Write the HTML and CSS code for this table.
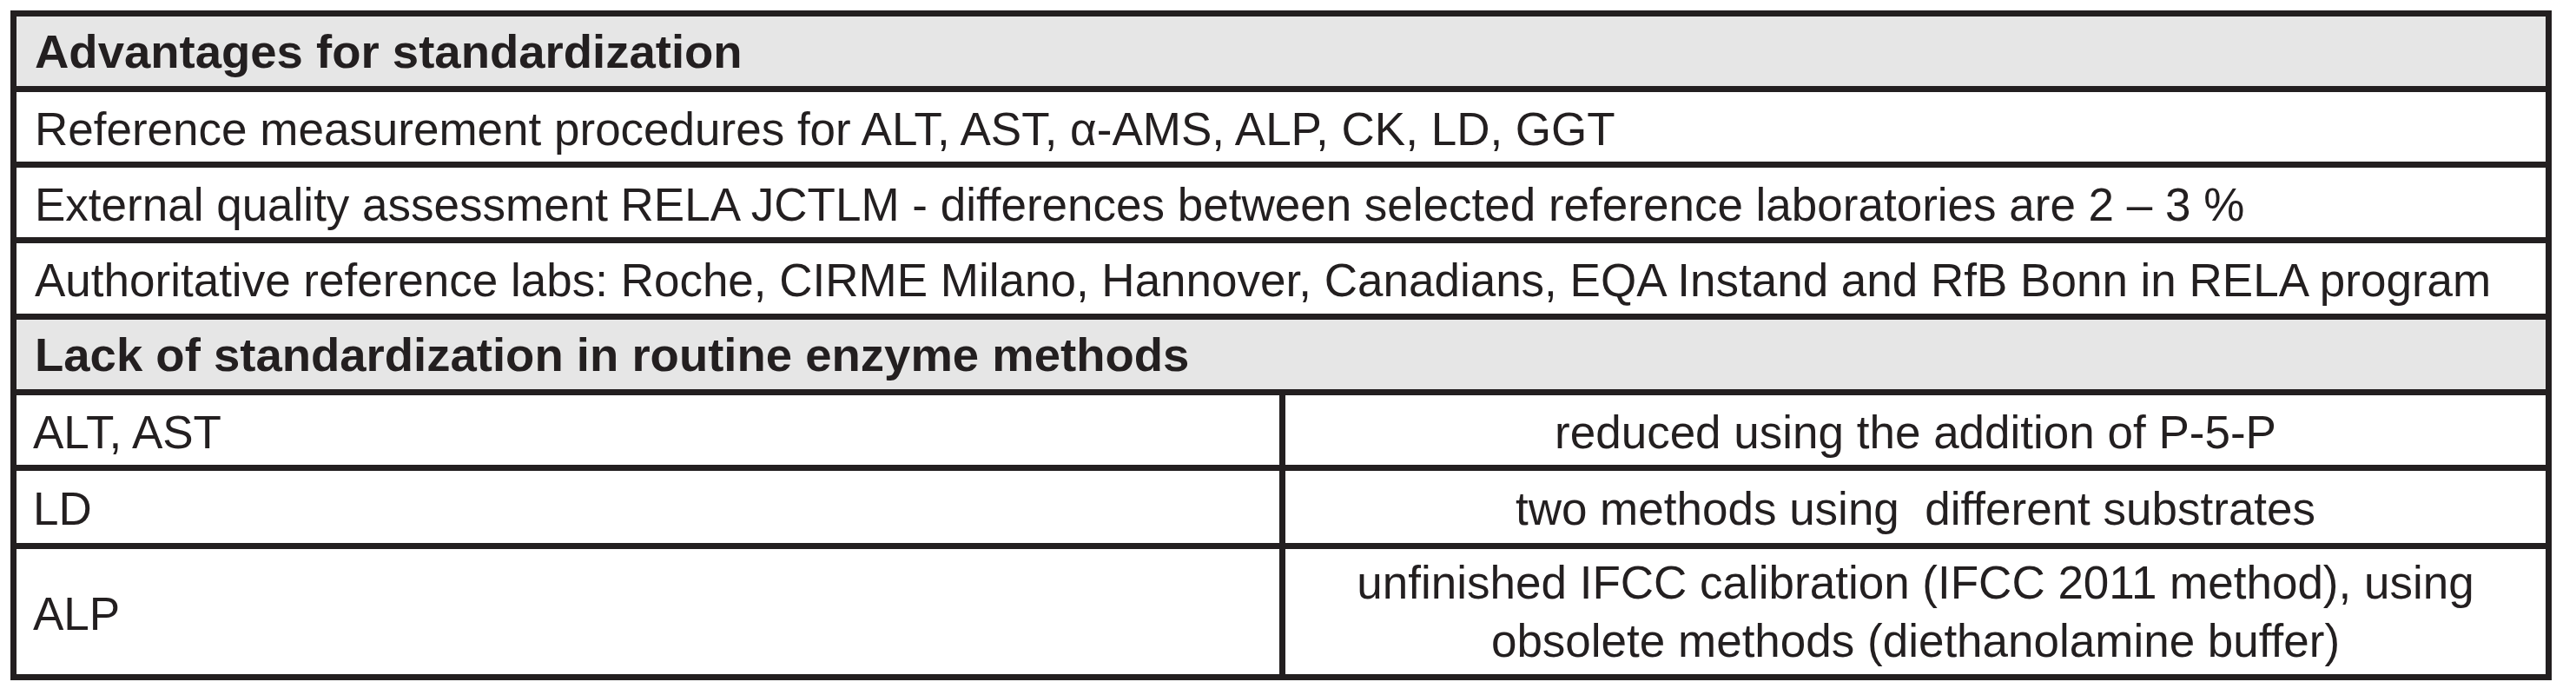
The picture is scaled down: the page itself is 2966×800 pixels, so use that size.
FILE: index.html
```html
<!DOCTYPE html>
<html lang="en">
<head>
<meta charset="utf-8">
<title>Enzyme standardization</title>
<link rel="stylesheet" href="styles.css">
</head>
<body>
<div class="tbl">
  <div class="row head h1">Advantages for standardization</div>
  <div class="row r80">Reference measurement procedures for ALT, AST, α-AMS, ALP, CK, LD, GGT</div>
  <div class="row r80">External quality assessment RELA JCTLM - differences between selected reference laboratories are 2 – 3 %</div>
  <div class="row r81">Authoritative reference labs: Roche, CIRME Milano, Hannover, Canadians, EQA Instand and RfB Bonn in RELA program</div>
  <div class="row head h2">Lack of standardization in routine enzyme methods</div>
  <div class="split r80s">
    <div class="c1">ALT, AST</div>
    <div class="c2">reduced using the addition of P-5-P</div>
  </div>
  <div class="split r83s">
    <div class="c1">LD</div>
    <div class="c2">two methods using&nbsp; different substrates</div>
  </div>
  <div class="split r144s">
    <div class="c1">ALP</div>
    <div class="c2 two">unfinished IFCC calibration (IFCC 2011 method), using<br>obsolete methods (diethanolamine buffer)</div>
  </div>
</div>
</body>
</html>
```

FILE: styles.css
```css
html, body {
  margin: 0;
  padding: 0;
  background: #ffffff;
}

body {
  font-family: "Liberation Sans", Arial, sans-serif;
  color: #231f20;
}

.tbl {
  box-sizing: border-box;
  width: 2926px;
  margin: 12px 0 0 12px;
  border: 7px solid #231f20;
  display: flex;
  flex-direction: column;
}

.row {
  display: flex;
  align-items: center;
  box-sizing: content-box;
  padding: 4px 20px 0 21px;
  font-size: 53px;
  white-space: nowrap;
  border-top: 7px solid #231f20;
}

.head {
  background: #e6e6e6;
  font-weight: bold;
  font-size: 54.5px;
  padding-top: 0;
}

.h1 {
  border-top: none;
  height: 80px;
}

.h2 {
  height: 80px;
}

.r80 { height: 76px; }
.r81 { height: 77px; }

.split {
  display: flex;
  border-top: 7px solid #231f20;
  font-size: 53px;
}

.r80s { height: 80px; }
.r83s { height: 83px; }
.r144s { height: 144px; }

.c1 {
  box-sizing: border-box;
  width: 1454px;
  flex: none;
  display: flex;
  align-items: center;
  padding: 4px 0 0 19px;
}

.c2 {
  flex: 1;
  border-left: 7px solid #231f20;
  display: flex;
  align-items: center;
  justify-content: center;
  text-align: center;
  padding-top: 4px;
  white-space: nowrap;
}

.c2.two {
  line-height: 67px;
  padding-top: 0;
}
```
